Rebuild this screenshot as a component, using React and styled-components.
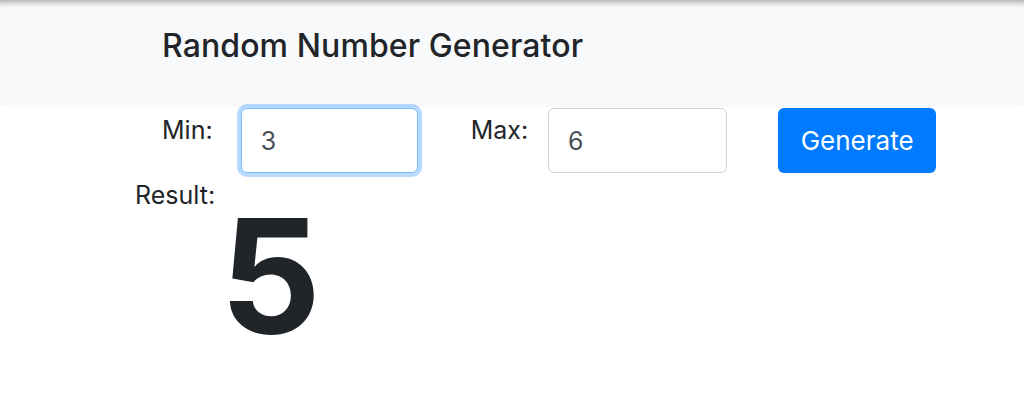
import React, { useState } from 'react';
import styled, { createGlobalStyle } from 'styled-components';

const GlobalStyle = createGlobalStyle`
    html, body {
        margin: 0;
        padding: 0;
        background: #fff;
        font-family: Inter, "Liberation Sans", sans-serif;
        color: #212529;
    }
`;

const Header = styled.header`
    height: 107px;
    box-sizing: border-box;
    padding: 27px 0 0 162px;
    background: #f8f9fa;
    box-shadow: inset 0 7px 6px -5px rgba(0, 0, 0, 0.35);
`;

const Title = styled.h1`
    margin: 0;
    font-size: 32px;
    font-weight: 500;
    line-height: 38px;
    letter-spacing: 0.1px;
`;

const FormRow = styled.div`
    display: flex;
    align-items: flex-start;
    padding-left: 162px;
    padding-top: 1px;
`;

const Label = styled.label`
    font-size: 25px;
    line-height: 40px;
    padding-top: 2px;
    margin-right: ${p => p.$gap}px;
`;

const Field = styled.input`
    box-sizing: border-box;
    width: ${p => p.$width}px;
    height: 65px;
    padding: 0 19px;
    font-family: inherit;
    font-size: 25px;
    color: #495057;
    background: #fff;
    border: 1.5px solid ${p => (p.$focused ? '#80bdff' : '#ced4da')};
    border-radius: 6px;
    outline: none;
    box-shadow: ${p => (p.$focused ? '0 0 0 4px rgba(0, 123, 255, 0.28)' : 'none')};
    margin-right: ${p => p.$gap}px;
`;

const Button = styled.button`
    box-sizing: border-box;
    width: 158px;
    height: 65px;
    border: none;
    border-radius: 6px;
    background: #007bff;
    color: #fff;
    font-family: inherit;
    font-size: 26px;
    cursor: pointer;
`;

const ResultBlock = styled.div`
    padding-left: 135px;
    margin-top: 2px;
`;

const ResultLabel = styled.div`
    font-size: 25px;
    line-height: 40px;
`;

const Number = styled.div`
    margin-left: 85px;
    font-size: 158px;
    font-weight: 700;
    line-height: 160px;
    margin-top: -19px;
    color: #212529;
`;

export default function App() {
    const [min, setMin] = useState('3');
    const [max, setMax] = useState('6');
    const [result, setResult] = useState(5);

    const generate = () => {
        const lo = parseInt(min, 10);
        const hi = parseInt(max, 10);
        if (isNaN(lo) || isNaN(hi) || hi < lo) return;
        setResult(lo + Math.floor(Math.random() * (hi - lo + 1)));
    };

    return (
        <>
            <GlobalStyle />
            <Header>
                <Title>Random Number Generator</Title>
            </Header>
            <FormRow>
                <Label $gap={28}>Min:</Label>
                <Field $width={177} $gap={53} $focused value={min} onChange={e => setMin(e.target.value)} />
                <Label $gap={20}>Max:</Label>
                <Field $width={179} $gap={51} value={max} onChange={e => setMax(e.target.value)} />
                <Button onClick={generate}>Generate</Button>
            </FormRow>
            <ResultBlock>
                <ResultLabel>Result:</ResultLabel>
                <Number>{result}</Number>
            </ResultBlock>
        </>
    );
}
